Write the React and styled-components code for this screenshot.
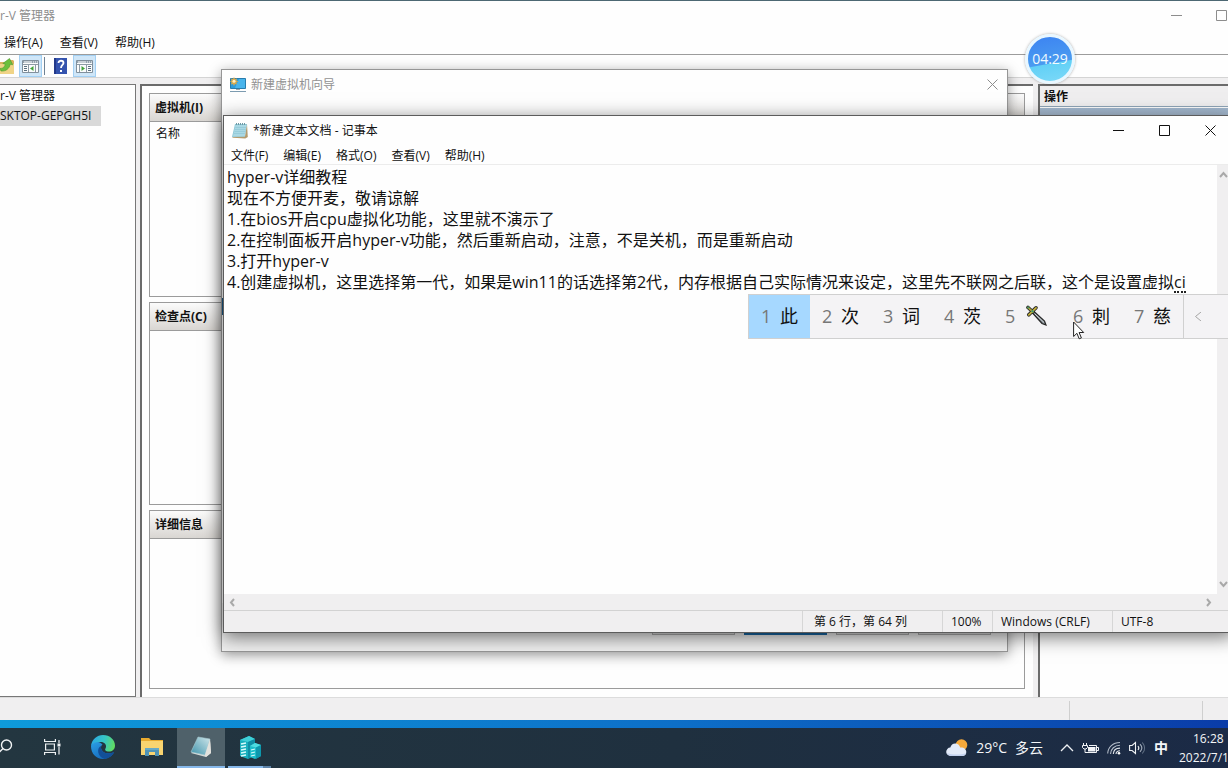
import React from "react";
import styled, { createGlobalStyle } from "styled-components";

const Global = createGlobalStyle`
  * { box-sizing: border-box; }
  body { margin: 0; font: 12px/16px "Open Sans", "Noto Sans CJK SC", sans-serif; color: #111; }
  button { font: inherit; color: inherit; border: 0; background: none; padding: 0; }
  svg { display: block; flex: none; }
`;

const Desktop = styled.div`
  position: relative;
  display: flex;
  flex-direction: column;
  min-height: 100vh;
  overflow: hidden;
  background: linear-gradient(90deg, #0e9bdb, #0d6fc8 55%, #0a3ca8);
`;

/* ---------- management console ---------- */
const Console = styled.main`
  flex: 1;
  display: flex;
  flex-direction: column;
  margin-bottom: 8px;
  background: #f0eff0;
  border-top: 1px solid #4d6873;
`;
const ConsoleTitle = styled.header`
  display: flex;
  align-items: center;
  justify-content: space-between;
  height: 29px;
  color: #8d8d8d;
  background: #fefefe;
`;
const ConsoleControls = styled.div`
  display: flex;
  gap: 34px;
  padding-right: 1px;
`;
const MenuBar = styled.nav`
  display: flex;
  align-items: center;
  gap: 17px;
  height: 24px;
  padding: 2px 0 0 4px;
  background: #fefefe;
`;
const Toolbar = styled.div`
  display: flex;
  align-items: center;
  height: 24px;
  background: #fefefe;
  border-top: 1px solid #9c9c9c;
  border-bottom: 1px solid #d4d4d4;
`;
const ToolButton = styled.button`
  display: grid;
  place-items: center;
  width: ${(p) => (p.$on ? 23 : 19)}px;
  height: 22px;
  background: ${(p) => (p.$on ? "#cfe6f8" : "none")};
  border: ${(p) => (p.$on ? "1px solid #a3d0f3" : "0")};
`;
const ToolDivider = styled.span`
  width: 1px;
  height: 18px;
  margin: 0 6px 0 2px;
  background: #6f8294;
`;
const ToolGap = styled.span`
  width: 3px;
`;
const Panes = styled.div`
  flex: 1;
  display: flex;
  padding-top: 6px;
`;
const Tree = styled.ul`
  width: 136px;
  margin: 0;
  padding: 1px 0 0;
  list-style: none;
  white-space: nowrap;
  background: #fefefe;
  border: 1px solid #777;
  border-width: 1px 1px 1px 0;
`;
const TreeItem = styled.li`
  display: flex;
  align-items: center;
  width: ${(p) => (p.$selected ? "101px" : "auto")};
  height: 20px;
  background: ${(p) => (p.$selected ? "#d9d9d9" : "none")};
`;
const Center = styled.section`
  flex: 1;
  display: grid;
  grid-template-rows: 204fr 203fr 179fr;
  row-gap: 5px;
  margin-left: 4px;
  padding: 7px 8px 8px 7px;
  background: #fefefe;
  border: solid #6b6b6b;
  border-width: 2px 0 0 2px;
`;
const Group = styled.section`
  border: 1px solid #9b9b9b;
`;
const GroupTitle = styled.h2`
  display: flex;
  align-items: center;
  height: 28px;
  margin: 0;
  padding-left: 5px;
  font-size: 12px;
  line-height: 16px;
  background: linear-gradient(#fbfbfb, #d9d6d2);
  border-bottom: 1px solid #9b9b9b;
`;
const ColumnName = styled.div`
  padding: 4px 6px;
`;
const Actions = styled.aside`
  width: 190px;
  margin-left: 5px;
  background: #fefefe;
  border: solid #6b6b6b;
  border-width: 2px 0 0 2px;
`;
const ActionsTitle = styled.h2`
  height: 21px;
  margin: 0;
  padding: 3px 4px 0;
  font-size: 12px;
  line-height: 16px;
  background: #efeeef;
  border-bottom: 1px solid #8fa5b8;
`;
const ActionsBand = styled.div`
  height: 20px;
  margin-top: 1px;
  background: linear-gradient(#a3b9d0, #b9cade);
`;
const ConsoleStatus = styled.footer`
  display: flex;
  justify-content: flex-end;
  height: 23px;
  padding-top: 3px;
  border-top: 1px solid #dcdcdc;
`;
const ConsoleCell = styled.div`
  width: ${(p) => p.$w}px;
  border-left: 1px solid #cfcfcf;
`;

/* ---------- wizard ---------- */
const Wizard = styled.section`
  position: absolute;
  left: 221px;
  top: 69px;
  width: 787px;
  bottom: 116px;
  display: flex;
  flex-direction: column;
  background: #fefefe;
  border: 1px solid #969696;
  box-shadow: 0 3px 12px rgba(0, 0, 0, 0.4);
`;
const WizardTitle = styled.header`
  display: flex;
  align-items: center;
  height: 29px;
  padding: 0 9px 0 8px;
  gap: 4px;
  color: #929292;
`;
const WizardClose = styled.button`
  margin-left: auto;
`;
const WizardSteps = styled.div`
  flex: 1;
  padding-top: 199px;
`;
const CurrentStep = styled.div`
  width: 160px;
  height: 17px;
  background: #1b5a88;
`;
const WizardFooter = styled.footer`
  display: flex;
  justify-content: flex-end;
  gap: 9px;
  height: 48px;
  padding: 9px 16px 16px;
  background: #f0f0f0;
`;
const WizardButton = styled.button`
  width: ${(p) => p.$w}px;
  background: #e1e1e1;
  border: ${(p) => (p.$primary ? "2px solid #1767a5" : "1px solid #adadad")};
`;

/* ---------- notepad ---------- */
const Notepad = styled.section`
  position: absolute;
  left: 223px;
  right: -6px;
  top: 115px;
  bottom: 135px;
  display: flex;
  flex-direction: column;
  background: #fefefe;
  border: 1px solid #5c5c5c;
  box-shadow: 0 4px 18px rgba(0, 0, 0, 0.55);
`;
const NotepadTitle = styled.header`
  display: flex;
  align-items: center;
  height: 29px;
  padding-left: 8px;
  gap: 5px;
`;
const Caption = styled.div`
  display: flex;
  margin-left: auto;
`;
const CaptionButton = styled.button`
  display: grid;
  place-items: center;
  width: 46px;
  height: 29px;
`;
const NotepadMenu = styled.nav`
  display: flex;
  align-items: center;
  gap: 15px;
  height: 20px;
  padding: 2px 0 0 7px;
  border-bottom: 1px solid #ececec;
`;
const EditorRow = styled.div`
  flex: 1;
  display: flex;
`;
const Editor = styled.textarea`
  flex: 1;
  min-width: 0;
  margin: 0;
  padding: 2px 3px;
  font: 16px/21px "Open Sans", "Noto Sans CJK SC", sans-serif;
  color: #111;
  background: transparent;
  border: 0;
  outline: 0;
  resize: none;
  overflow: hidden;
  white-space: pre;
`;
const VScroll = styled.div`
  display: flex;
  flex-direction: column;
  justify-content: space-between;
  width: 16px;
  padding: 5px 2px;
  background: #f0eff0;
`;
const HScroll = styled.div`
  display: flex;
  align-items: center;
  justify-content: space-between;
  height: 16px;
  padding: 0 20px 0 4px;
  background: #f0eff0;
`;
const NotepadStatus = styled.footer`
  display: flex;
  justify-content: flex-end;
  height: 22px;
  background: #f0eff0;
  border-top: 1px solid #d2d2d2;
`;
const StatusCell = styled.div`
  width: ${(p) => p.$w}px;
  padding: 3px 0 0 ${(p) => p.$pad || 8}px;
  white-space: nowrap;
  border-left: 1px solid #d6d6d6;
`;

/* ---------- input method ---------- */
const Composing = styled.div`
  position: absolute;
  left: 1174px;
  top: 291px;
  width: 12px;
  border-top: 2px dotted #222;
`;
const Candidates = styled.div`
  position: absolute;
  left: 748px;
  right: 0;
  top: 294px;
  display: flex;
  height: 45px;
  font-size: 18px;
  line-height: 24px;
  background: #f4f3f5;
  border: 1px solid #d0d0d0;
  border-right: 0;
`;
const Candidate = styled.button`
  display: flex;
  align-items: center;
  gap: ${(p) => (p.$wide ? 11 : 9)}px;
  width: ${(p) => (p.$wide ? 68 : 61)}px;
  padding: 0 0 2px 12px;
  flex: none;
  background: ${(p) => (p.$on ? "#a6d8ff" : "none")};
`;
const Digit = styled.span`
  width: 10px;
  color: #777;
`;
const PrevPage = styled.button`
  display: flex;
  align-items: center;
  flex: 1;
  padding-left: 10px;
  border-left: 1px solid #d0d0d0;
`;

/* ---------- floating pieces ---------- */
const Timer = styled.div`
  position: absolute;
  right: 153px;
  top: 34px;
  display: grid;
  place-items: center;
  width: 50px;
  height: 50px;
  color: #f2fbff;
  font-size: 14px;
  line-height: 20px;
  border: 3px solid #e9f7ff;
  border-radius: 50%;
  background: linear-gradient(170deg, #3c83f2, #4a9bf0 58%, #62d0f6 60%, #7cd9f8);
  box-shadow: 0 0 3px rgba(0, 0, 0, 0.35);
`;
const Pointer = styled.div`
  position: absolute;
  left: 1073px;
  top: 321px;
`;

/* ---------- taskbar ---------- */
const Taskbar = styled.footer`
  display: flex;
  align-items: stretch;
  justify-content: space-between;
  height: 40px;
  color: #f4f6f8;
  background: linear-gradient(90deg, #233640, #1f303f 55%, #1b2a46);
`;
const Apps = styled.div`
  display: flex;
  gap: 1px;
  margin-left: -19px;
`;
const App_ = styled.button`
  display: grid;
  place-items: center;
  width: 48px;
  background: ${(p) => (p.$active ? "#4f616a" : "none")};
  border-bottom: 2px solid ${(p) => (p.$active ? "#86b8ea" : "transparent")};
`;
const RunningApp = styled(App_)`
  border-image: linear-gradient(90deg, transparent 8%, #86b8ea 8% 74%, #5d83a8 74% 91%, transparent 91%) 2;
`;
const Tray = styled.div`
  display: flex;
  align-items: center;
`;
const Weather = styled.button`
  display: flex;
  align-items: center;
  gap: 8px;
  margin-right: 17px;
  font-size: 14px;
  line-height: 20px;
`;
const TrayIcons = styled.div`
  display: flex;
  align-items: center;
  gap: 8px;
`;
const InputMode = styled.button`
  font-size: 14px;
  line-height: 20px;
  font-weight: 700;
`;
const Clock = styled.time`
  width: 49px;
  margin-left: 11px;
  line-height: 19px;
  white-space: nowrap;
`;
const Hour = styled.div`
  padding-left: 14px;
`;

/* ---------- icons ---------- */
const Minimize = ({ c }) => (
  <svg width="11" height="11" stroke={c}><path d="M0 5.5h11" /></svg>
);
const Maximize = ({ c }) => (
  <svg width="11" height="11" stroke={c} fill="none"><path d="M.5.5h10v10H.5z" /></svg>
);
const Close = ({ c }) => (
  <svg width="11" height="11" stroke={c}><path d="M.5.5l10 10M10.5.5l-10 10" /></svg>
);
const Arrow = ({ d, c = "#a9a9a9", w = 2 }) => (
  <svg width="9" height="9" stroke={c} strokeWidth={w} fill="none"><path d={d} /></svg>
);
const UpFolder = () => (
  <svg width="19" height="18" viewBox="0 0 19 18">
    <path d="M0 5h7l1-2h5l1 1v13H0z" fill="#d9b25c" />
    <path d="M0 7h14v10H0z" fill="#f0d487" />
    <path d="M0 11.500C3.500 11.500 5 9.500 5.200 7L2.800 6.500 9.500 1.500l3.300 6.300-2.700-.5C9.500 11.500 6 14.500 1 14z" fill="#6cbf3c" stroke="#4b9a2b" strokeWidth=".6" />
  </svg>
);
const PaneIcon = ({ flip }) => (
  <svg width="17" height="15" viewBox="0 0 17 15">
    <path d="M.5 1.500h16v12H.5z" fill="#fbfcfc" stroke="#81909c" />
    <path d="M1 2h15v2H1z" fill="#93a2ae" />
    <path d="M2 3h8M11 3h1M13 3h1M15 3h1" stroke="#fff" />
    <path d="M1 5.500h15" stroke="#8e9ba6" />
    <g transform={flip ? "translate(17 0) scale(-1 1)" : undefined}>
      <path d="M6.500 6v7M13.500 6v7" stroke="#8e9ba6" />
      <path d="M2 7.500h3M2 9.500h3M2 11.500h3" stroke="#5c7080" />
      <path d="M11.500 7v5l-3.500-2.500z" fill="#42a33a" />
    </g>
  </svg>
);
const HelpIcon = () => (
  <svg width="13" height="16" viewBox="0 0 13 16">
    <path d="M0 0h13v16H0z" fill="#3453ae" />
    <path d="M0 0h2v16H0z" fill="#23398a" />
    <path d="M4.500 5c0-3 5-3 5 0 0 2-2.500 2-2.500 5" fill="none" stroke="#fff" strokeWidth="1.800" />
    <path d="M6 12h2v2H6z" fill="#fff" />
  </svg>
);
const WizardIcon = () => (
  <svg width="17" height="16" viewBox="0 0 17 16">
    <path d="M.5 1.500h15v10H.5z" fill="#2b9bdc" stroke="#287cad" />
    <path d="M9 2h6v9H5z" fill="#48b4ec" />
    <path d="M6 12h4v1H6z" fill="#9aa4ab" />
    <path d="M0 14h16v1H0z" fill="#7c9bb0" />
    <path d="M4 0l1 2 2-.6-.6 2 2 1.200-2 1 .6 2-2-.6-1 2-1-2-2 .6.600-2L0 4.600l1.600-1.200-.6-2 2 .6z" fill="#d9a94c" />
    <circle cx="4" cy="4.300" r="1.500" fill="#fff1c4" />
  </svg>
);
const NotepadIcon = () => (
  <svg width="16" height="17" viewBox="0 0 16 17">
    <path d="M3 2h12l-2 13H0z" fill="#8ec7d6" />
    <path d="M15 2l.8 13-2.500 1.500L1 15.800 0 15l13-.5z" fill="#b39a6d" />
    <path d="M3.500 3h11L12.800 14.500H1z" fill="#a9d8e4" />
    <path d="M3.200 5.500h10.800M2.800 7.500h10.800M2.400 9.500h10.800M2 11.500h10.800" stroke="#8cc4d3" strokeWidth=".6" />
    <path d="M4.500 1v2M6.500 1v2M8.500 1v2M10.500 1v2M12.500 1v2" stroke="#6d98a4" />
  </svg>
);
const Dagger = () => (
  <svg width="21" height="21" viewBox="0 0 21 21">
    <path d="M8 6.500l10.500 9.500 1.500 4-4-1.500L6.500 8z" fill="#7d868c" stroke="#262626" strokeWidth="1.200" />
    <path d="M8.500 8.500l9.500 9" stroke="#d3d9dc" />
    <path d="M2 2.500l5 4.500" stroke="#262626" strokeWidth="3.600" strokeLinecap="round" />
    <path d="M2.800 9.800L10 2.800" stroke="#262626" strokeWidth="3.600" strokeLinecap="round" />
    <path d="M2 2.500l5 4.500" stroke="#a9a23a" strokeWidth="1.700" strokeLinecap="round" />
    <path d="M2.800 9.800L10 2.800" stroke="#c9b53a" strokeWidth="1.700" strokeLinecap="round" />
    <circle cx="6.500" cy="6.300" r="1.200" fill="#43966b" />
    <circle cx="2.200" cy="2.600" r="1" fill="#43966b" />
  </svg>
);
const SearchIcon = () => (
  <svg width="16" height="16" viewBox="0 0 16 16" fill="none" stroke="#f2f4f5" strokeWidth="1.400">
    <circle cx="9.500" cy="6" r="5" /><path d="M6 9.500L1 14.500" />
  </svg>
);
const TaskViewIcon = () => (
  <svg width="20" height="16" viewBox="0 0 20 16" fill="none" stroke="#eef1f2" strokeWidth="1.200">
    <path d="M.6 0v2.500h10.800V0M.6 16v-2.500h10.800V16M1.600 5h8.800v6H1.600zM15 1v3M15 8v7.500" />
    <path d="M13.500 4.500h3v3h-3z" fill="#eef1f2" stroke="none" />
  </svg>
);
const EdgeIcon = () => (
  <svg width="24" height="24" viewBox="0 0 24 24">
    <defs>
      <linearGradient id="edgeTop" x1="0" y1=".3" x2="1" y2=".5">
        <stop offset="0" stopColor="#2ba7e5" /><stop offset=".55" stopColor="#36c6c4" /><stop offset="1" stopColor="#61dc61" />
      </linearGradient>
      <linearGradient id="edgeBody" x1="0" y1="0" x2=".7" y2="1">
        <stop offset="0" stopColor="#2ba0e6" /><stop offset="1" stopColor="#1466b8" />
      </linearGradient>
    </defs>
    <path d="M0 11c0 7.500 5 13 12 13 4.500 0 8.500-2.500 10.700-6 .3-.6-.2-.9-.7-.6C16 20 10 17 10 12.500c0-1.200.5-2.200 1.500-3C9 6 1 5 0 11z" fill="url(#edgeBody)" />
    <path d="M10 11c-4.500 2-4 10.500 3.500 13 4.500-.7 7.500-3 9.200-6 .3-.6-.2-.9-.7-.6C16 20 10 17 10 12.500z" fill="#124f98" />
    <path d="M0 11C1 4 6 0 12 0c7 0 12 5 12 10.500 0 4-3 6-6 6-3.500 0-4.500-1.500-3.500-3 1.500-2.500 0-6-4-6.500C5.500 6.500 1 8 0 11z" fill="url(#edgeTop)" />
  </svg>
);
const FolderIcon = () => (
  <svg width="22" height="20" viewBox="0 0 22 20">
    <path d="M0 1h8l2 2h12v15H0z" fill="#e8ab2f" />
    <path d="M0 4h22v14H0z" fill="#f8d470" />
    <path d="M4 19v-8h14v8h-4v-4H8v4z" fill="#4f93b5" />
    <path d="M4 11h14v2H4z" fill="#66a9c6" />
  </svg>
);
const NotesIcon = () => (
  <svg width="22" height="22" viewBox="0 0 22 22">
    <defs>
      <linearGradient id="paper" x1="0" y1="1" x2="1" y2="0">
        <stop offset="0" stopColor="#3f93ab" /><stop offset="1" stopColor="#cfe6ea" />
      </linearGradient>
    </defs>
    <path d="M20 3l1 14-5 4L1 17z" fill="#d9dcda" />
    <path d="M8 1l12 2-5 16-14-3z" fill="url(#paper)" stroke="#a5c7ce" strokeWidth=".6" />
    <path d="M20 3l1 14-5 4-1-2z" fill="#e3e2dd" />
  </svg>
);
const ServerIcon = () => (
  <svg width="22" height="23" viewBox="0 0 22 23">
    <path d="M1 4l9-4 6 3v16l-7 4-8-3z" fill="#17aebd" />
    <path d="M1 4l9-4 6 3-7 3z" fill="#3fd0d8" />
    <path d="M9 6l7-3v16l-7 4z" fill="#0f8ea5" />
    <path d="M2 8l5-1M2 11l5-1M2 14l5-1M2 17l5-1M2 20l5-1" stroke="#d6fbfb" strokeWidth="1.500" />
    <path d="M11 10l5-3 6 2v11l-6 3-5-2z" fill="#1bbdca" />
    <path d="M11 10l5-3 6 2-5 2.500z" fill="#4fdce0" />
    <path d="M17 11.500L22 9v11l-5 3z" fill="#0d98ad" />
    <path d="M12 14l4-1M12 17l4-1M12 20l4-1" stroke="#d6fbfb" strokeWidth="1.200" />
  </svg>
);
const WeatherIcon = () => (
  <svg width="22" height="18" viewBox="0 0 22 18">
    <circle cx="15.500" cy="6" r="5.800" fill="#f5a93b" />
    <path d="M4.500 17a4.200 4.200 0 01-.2-8.400C5 5.500 7.500 4 10 4.500c2.200.4 3.600 1.800 4.200 4C17.500 8 20.300 10 20.300 13c0 2.400-1.600 4-4 4z" fill="#e3ebf9" />
    <path d="M1 14c1 2 2.500 3 4 3h11c2 0 3.600-1 4.200-3-5 2-14 2-19.200 0z" fill="#c3d2ef" />
  </svg>
);
const BatteryIcon = () => (
  <svg width="17" height="13" viewBox="0 0 17 13" fill="none" stroke="#f2f4f7">
    <path d="M7 3.500h7.500v7h-9M15 5.500h1.500v3H15M1.500 1v2M4.500 1v2M3 7v3.500h3" />
    <path d="M.5 3.500h5v2l-1.500 1.500h-2L.5 5.500z" fill="#1c2c46" />
    <path d="M6 5h7.500v4.500H6z" fill="#f2f4f7" stroke="none" />
  </svg>
);
const WifiIcon = () => (
  <svg width="14" height="14" viewBox="0 0 14 14" fill="none" stroke="#b4bdc9" strokeWidth="1.100">
    <path d="M.7 12.500C1 6 6 1.500 13 1.500M3.500 13c.3-5 4-8.700 9.500-8.700" />
    <path d="M6.300 13c.2-3.400 2.700-5.900 6.700-5.900" stroke="#e2e6eb" />
    <path d="M9 13c.2-1.900 1.500-3.200 4-3.200" stroke="#e2e6eb" />
    <circle cx="12" cy="12.300" r="1.300" fill="#fff" stroke="none" />
  </svg>
);
const SoundIcon = () => (
  <svg width="17" height="14" viewBox="0 0 17 14" fill="none" stroke="#eef1f4" strokeWidth="1.100">
    <path d="M.6 4.500h2.500L6.500 1.500v11L3.100 9.500H.6z" />
    <path d="M9 5c1 1.200 1 2.800 0 4" />
    <path d="M11 3.200c2.200 2.300 2.200 5.300 0 7.600" stroke="#a2acb9" />
    <path d="M13.300 1.500c3 3.300 3 7.700 0 11" stroke="#68778a" />
  </svg>
);

const noteText = [
  "hyper-v详细教程",
  "现在不方便开麦，敬请谅解",
  "1.在bios开启cpu虚拟化功能，这里就不演示了",
  "2.在控制面板开启hyper-v功能，然后重新启动，注意，不是关机，而是重新启动",
  "3.打开hyper-v",
  "4.创建虚拟机，这里选择第一代，如果是win11的话选择第2代，内存根据自己实际情况来设定，这里先不联网之后联，这个是设置虚拟ci",
].join("\n");

const candidates = ["此", "次", "词", "茨", null, "刺", "慈"];

export default function App() {
  return (
    <Desktop>
      <Global />
      <Console>
        <ConsoleTitle>
          <span>r-V 管理器</span>
          <ConsoleControls>
            <button aria-label="最小化"><Minimize c="#8d8d8d" /></button>
            <button aria-label="最大化"><Maximize c="#8d8d8d" /></button>
          </ConsoleControls>
        </ConsoleTitle>
        <MenuBar>
          <button>操作(A)</button>
          <button>查看(V)</button>
          <button>帮助(H)</button>
        </MenuBar>
        <Toolbar>
          <ToolButton aria-label="向上"><UpFolder /></ToolButton>
          <ToolButton $on aria-label="显示树"><PaneIcon /></ToolButton>
          <ToolDivider />
          <ToolButton aria-label="帮助"><HelpIcon /></ToolButton>
          <ToolGap />
          <ToolButton $on aria-label="显示操作"><PaneIcon flip /></ToolButton>
        </Toolbar>
        <Panes>
          <Tree>
            <TreeItem>r-V 管理器</TreeItem>
            <TreeItem $selected>SKTOP-GEPGH5I</TreeItem>
          </Tree>
          <Center>
            <Group>
              <GroupTitle>虚拟机(I)</GroupTitle>
              <ColumnName>名称</ColumnName>
            </Group>
            <Group><GroupTitle>检查点(C)</GroupTitle></Group>
            <Group><GroupTitle>详细信息</GroupTitle></Group>
          </Center>
          <Actions>
            <ActionsTitle>操作</ActionsTitle>
            <ActionsBand />
          </Actions>
        </Panes>
        <ConsoleStatus>
          <ConsoleCell $w={133} />
          <ConsoleCell $w={26} />
        </ConsoleStatus>
      </Console>

      <Wizard>
        <WizardTitle>
          <WizardIcon />
          <span>新建虚拟机向导</span>
          <WizardClose aria-label="关闭"><Close c="#8d8d8d" /></WizardClose>
        </WizardTitle>
        <WizardSteps><CurrentStep /></WizardSteps>
        <WizardFooter>
          <WizardButton $w={83} aria-label="上一步" />
          <WizardButton $w={83} $primary aria-label="下一步" />
          <WizardButton $w={73} aria-label="完成" />
          <WizardButton $w={73} aria-label="取消" />
        </WizardFooter>
      </Wizard>

      <Notepad>
        <NotepadTitle>
          <NotepadIcon />
          <span>*新建文本文档 - 记事本</span>
          <Caption>
            <CaptionButton aria-label="最小化"><Minimize c="#111" /></CaptionButton>
            <CaptionButton aria-label="最大化"><Maximize c="#111" /></CaptionButton>
            <CaptionButton aria-label="关闭"><Close c="#111" /></CaptionButton>
          </Caption>
        </NotepadTitle>
        <NotepadMenu>
          <button>文件(F)</button>
          <button>编辑(E)</button>
          <button>格式(O)</button>
          <button>查看(V)</button>
          <button>帮助(H)</button>
        </NotepadMenu>
        <EditorRow>
          <Editor aria-label="文本" wrap="off" spellCheck={false} defaultValue={noteText} />
          <VScroll>
            <Arrow d="M1 7l3.500-4L8 7" />
            <Arrow d="M1 2l3.500 4L8 2" />
          </VScroll>
        </EditorRow>
        <HScroll>
          <Arrow d="M6 1L3 4.500 6 8" />
          <Arrow d="M3 1l3 3.500L3 8" />
        </HScroll>
        <NotepadStatus>
          <StatusCell $w={140} $pad={11}>第 6 行，第 64 列</StatusCell>
          <StatusCell $w={50}>100%</StatusCell>
          <StatusCell $w={120}>Windows (CRLF)</StatusCell>
          <StatusCell $w={121}>UTF-8</StatusCell>
        </NotepadStatus>
      </Notepad>

      <Composing />
      <Candidates>
        {candidates.map((word, i) => (
          <Candidate key={i} $on={i === 0} $wide={!word}>
            <Digit>{i + 1}</Digit>
            {word ? <span>{word}</span> : <Dagger />}
          </Candidate>
        ))}
        <PrevPage aria-label="上一页"><Arrow d="M7 0L1.500 4.500 7 9" c="#a5a5a5" w={1} /></PrevPage>
      </Candidates>

      <Timer>04:29</Timer>
      <Pointer>
        <svg width="12" height="19" viewBox="0 0 12 19">
          <path d="M.6 1v14.500l3.300-3.200 2.300 5.500 2.200-.9-2.300-5.400h4.600z" fill="#fff" stroke="#222" />
        </svg>
      </Pointer>

      <Taskbar>
        <Apps>
          <App_ aria-label="搜索"><SearchIcon /></App_>
          <App_ aria-label="任务视图"><TaskViewIcon /></App_>
          <App_ aria-label="Edge"><EdgeIcon /></App_>
          <App_ aria-label="文件资源管理器"><FolderIcon /></App_>
          <App_ $active aria-label="记事本"><NotesIcon /></App_>
          <RunningApp aria-label="Hyper-V"><ServerIcon /></RunningApp>
        </Apps>
        <Tray>
          <Weather>
            <WeatherIcon />
            <span>29°C</span>
            <span>多云</span>
          </Weather>
          <TrayIcons>
            <svg width="14" height="8" fill="none" stroke="#eef1f4" strokeWidth="1.300"><path d="M1 7l6-6 6 6" /></svg>
            <BatteryIcon />
            <WifiIcon />
            <SoundIcon />
            <InputMode>中</InputMode>
          </TrayIcons>
          <Clock>
            <Hour>16:28</Hour>
            <div>2022/7/1</div>
          </Clock>
        </Tray>
      </Taskbar>
    </Desktop>
  );
}
